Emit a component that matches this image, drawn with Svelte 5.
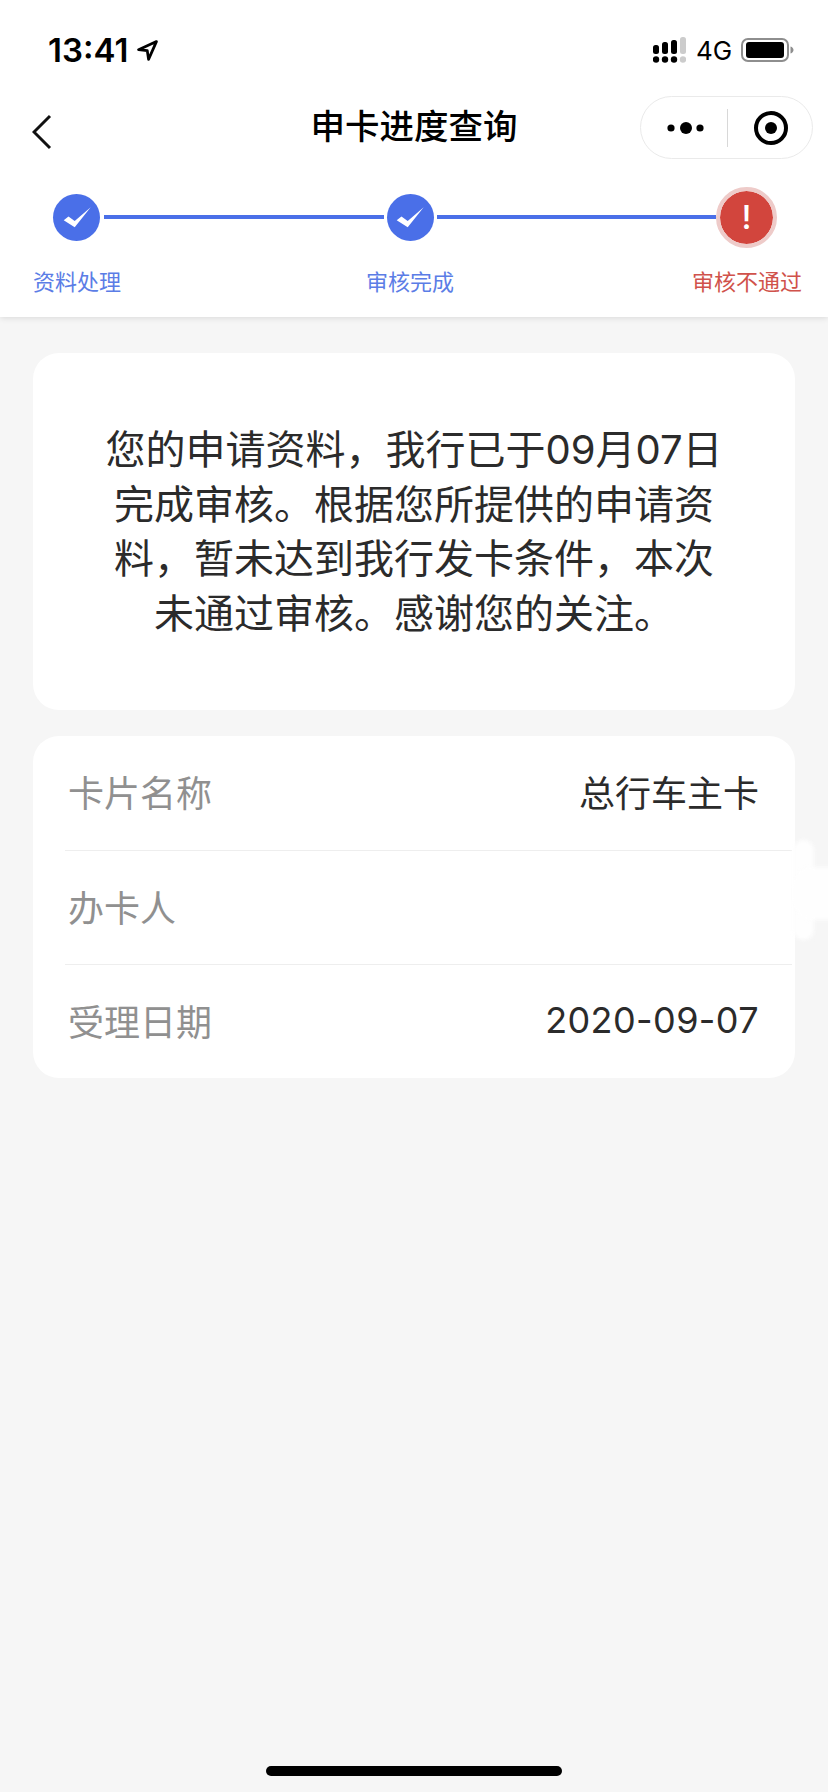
<script>
	const infoRows = [
		{ label: '卡片名称', value: '总行车主卡' },
		{ label: '办卡人', value: '' },
		{ label: '受理日期', value: '2020-09-07', isDate: true }
	];
</script>

<div class="page">
	<header class="top">
		<div class="status">
			<div class="time">
				<span>13:41</span>
				<svg width="21" height="21" viewBox="0 0 20 20">
					<path d="M18.5 1.5 1.5 9.2l8.3 1 1.2 8.3z" fill="none" stroke="#000" stroke-width="2.6" stroke-linejoin="round" />
				</svg>
			</div>
			<div class="status-right">
				<svg width="33" height="26" viewBox="0 0 33 26">
					<rect x="0" y="8" width="6" height="9" rx="2.5" fill="#000" />
					<rect x="9" y="5" width="6" height="12" rx="2.5" fill="#000" />
					<rect x="18" y="3" width="6" height="14" rx="2.5" fill="#000" />
					<rect x="27" y="0" width="6" height="17" rx="2.5" fill="#ccc" />
					<circle cx="3" cy="22.5" r="3.2" fill="#000" />
					<circle cx="12" cy="22.5" r="3.2" fill="#000" />
					<circle cx="21" cy="22.5" r="3.2" fill="#000" />
					<circle cx="30" cy="22.5" r="3.2" fill="#ccc" />
				</svg>
				<span class="net">4G</span>
				<svg class="battery" width="53" height="24" viewBox="0 0 53 24">
					<rect x="1" y="1" width="46" height="22" rx="6" fill="none" stroke="#8e8e8e" stroke-width="2" />
					<rect x="5" y="4" width="38" height="16" rx="3" fill="#000" />
					<path d="M49.5 8.5c2 .6 3 2 3 3.5s-1 2.900-3 3.500z" fill="#8e8e8e" />
				</svg>
			</div>
		</div>

		<nav class="nav">
			<svg class="back" width="20" height="36" viewBox="0 0 20 36">
				<path d="M18 2 2 18l16 16" fill="none" stroke="#111" stroke-width="3" />
			</svg>
			<h1>申卡进度查询</h1>
			<div class="capsule">
				<svg width="42" height="14" viewBox="0 0 42 14">
					<circle cx="4" cy="7" r="3.600" fill="#000" />
					<circle cx="19" cy="7" r="6" fill="#000" />
					<circle cx="33" cy="7" r="3.600" fill="#000" />
				</svg>
				<span class="divider"></span>
				<svg width="36" height="36" viewBox="0 0 36 36">
					<circle cx="18" cy="18" r="15" fill="none" stroke="#000" stroke-width="4" />
					<circle cx="18" cy="18" r="6" fill="#000" />
				</svg>
			</div>
		</nav>

		<div class="steps">
			<div class="step-icons">
				<span class="dot">
					<svg width="28" height="21" viewBox="0 0 28 21">
						<path d="M.7 13.300 5.500 9.500l6.200 4.500L27.700.3 11.700 20.300z" fill="#fff" />
					</svg>
				</span>
				<span class="line"></span>
				<span class="dot">
					<svg width="28" height="21" viewBox="0 0 28 21">
						<path d="M.7 13.300 5.500 9.500l6.200 4.500L27.700.3 11.700 20.300z" fill="#fff" />
					</svg>
				</span>
				<span class="line last"></span>
				<span class="dot-fail">!</span>
			</div>
			<div class="step-labels">
				<span>资料处理</span>
				<span class="mid">审核完成</span>
				<span class="fail">审核不通过</span>
			</div>
		</div>
	</header>

	<main class="content">
		<section class="card message">
			<p>您的申请资料，我行已于09月07日完成审核。根据您所提供的申请资料，暂未达到我行发卡条件，本次未通过审核。感谢您的关注。</p>
		</section>

		<section class="card info">
			{#each infoRows as row}
				<div class="row">
					<span class="label">{row.label}</span>
					<span class="value" class:date={row.isDate}>{row.value}</span>
				</div>
			{/each}
			<div class="smear"></div>
			<div class="smear wide"></div>
		</section>
	</main>

	<div class="home-bar"></div>
</div>

<style>
	:global(body) {
		margin: 0;
		background: #f6f6f6;
	}

	.page {
		display: flex;
		flex-direction: column;
		height: 1792px;
		overflow: hidden;
		font-family: Inter, 'Noto Sans CJK SC', sans-serif;
		color: #222;
	}

	.top {
		background: #fff;
		height: 317px;
		box-shadow: 0 1px 6px rgba(0, 0, 0, 0.12);
		position: relative;
		z-index: 1;
	}

	.status {
		display: flex;
		justify-content: space-between;
		align-items: center;
		height: 34px;
		padding: 33px 34px 0 48px;
	}

	.time {
		display: flex;
		align-items: center;
		gap: 9px;
		font-size: 33px;
		font-weight: 600;
		color: #000;
	}

	.status-right {
		display: flex;
		align-items: center;
		color: #000;
	}

	.net {
		font-size: 26px;
		width: 45px;
		margin-left: 10px;
	}

	.nav {
		display: flex;
		align-items: center;
		justify-content: space-between;
		position: relative;
		height: 63px;
		margin-top: 29px;
		padding: 0 15px 0 32px;
	}

	.nav h1 {
		position: absolute;
		left: 0;
		right: 0;
		top: 6px;
		margin: 0;
		text-align: center;
		font-size: 34.500px;
		line-height: 50px;
		font-weight: 500;
		color: #000;
	}

	.back {
		margin-top: 8px;
	}

	.capsule {
		display: flex;
		align-items: center;
		box-sizing: border-box;
		width: 173px;
		height: 63px;
		padding-left: 26px;
		border: 1px solid #eaeaea;
		border-radius: 32px;
	}

	.divider {
		width: 1px;
		height: 38px;
		background: #d8d8d8;
		margin: 0 25px 0 18px;
	}

	.step-icons {
		display: flex;
		align-items: center;
		height: 62px;
		margin-top: 27px;
		padding: 0 51px 0 53px;
	}

	.dot {
		display: flex;
		align-items: center;
		justify-content: center;
		width: 47px;
		height: 47px;
		border-radius: 50%;
		background: #4a6fe8;
		flex-shrink: 0;
	}

	.line {
		flex: 1;
		height: 4px;
		background: #4a6fe8;
		margin: 0 3px 0 4px;
	}

	.line.last {
		margin: 0 0 0 3px;
	}

	.dot-fail {
		display: flex;
		align-items: center;
		justify-content: center;
		width: 53px;
		height: 53px;
		border: 4.500px solid #eecbc9;
		border-radius: 50%;
		background: #d2453d;
		background-clip: padding-box;
		color: #fff;
		font-size: 33px;
		font-weight: 500;
		flex-shrink: 0;
	}

	.step-labels {
		display: flex;
		justify-content: space-between;
		margin-top: 18px;
		padding: 0 26px 0 33px;
		font-size: 22px;
		line-height: 32px;
		color: #5b7de6;
	}

	.mid {
		margin-left: 7px;
	}

	.fail {
		color: #d0524b;
	}

	.content {
		display: flex;
		flex-direction: column;
		gap: 26px;
		padding: 36px 33px 0;
	}

	.card {
		background: #fff;
		border-radius: 26px;
		position: relative;
	}

	.message {
		box-sizing: border-box;
		height: 357px;
		padding: 70px 70px 0;
	}

	.message p {
		margin: 0;
		font-size: 40px;
		line-height: 54.600px;
		text-align: center;
		color: #2b2b2b;
	}

	.row {
		display: flex;
		justify-content: space-between;
		align-items: center;
		box-sizing: border-box;
		height: 114px;
		margin: 0 3px 0 32px;
		padding: 0 33px 4px 3px;
		font-size: 36px;
	}

	.row + .row {
		border-top: 1px solid #eee;
	}

	.label {
		color: #909090;
	}

	.value {
		color: #2b2b2b;
	}

	.date {
		letter-spacing: 0.4px;
	}

	.smear {
		position: absolute;
		left: 760px;
		top: 104px;
		width: 21px;
		height: 100px;
		border-radius: 10px;
		background: #fefefe;
		filter: blur(2px);
	}

	.smear.wide {
		top: 131px;
		width: 60px;
		height: 53px;
		border-radius: 20px;
	}

	.home-bar {
		width: 296px;
		height: 10px;
		border-radius: 5px;
		background: #000;
		margin: auto auto 16px;
	}
</style>
